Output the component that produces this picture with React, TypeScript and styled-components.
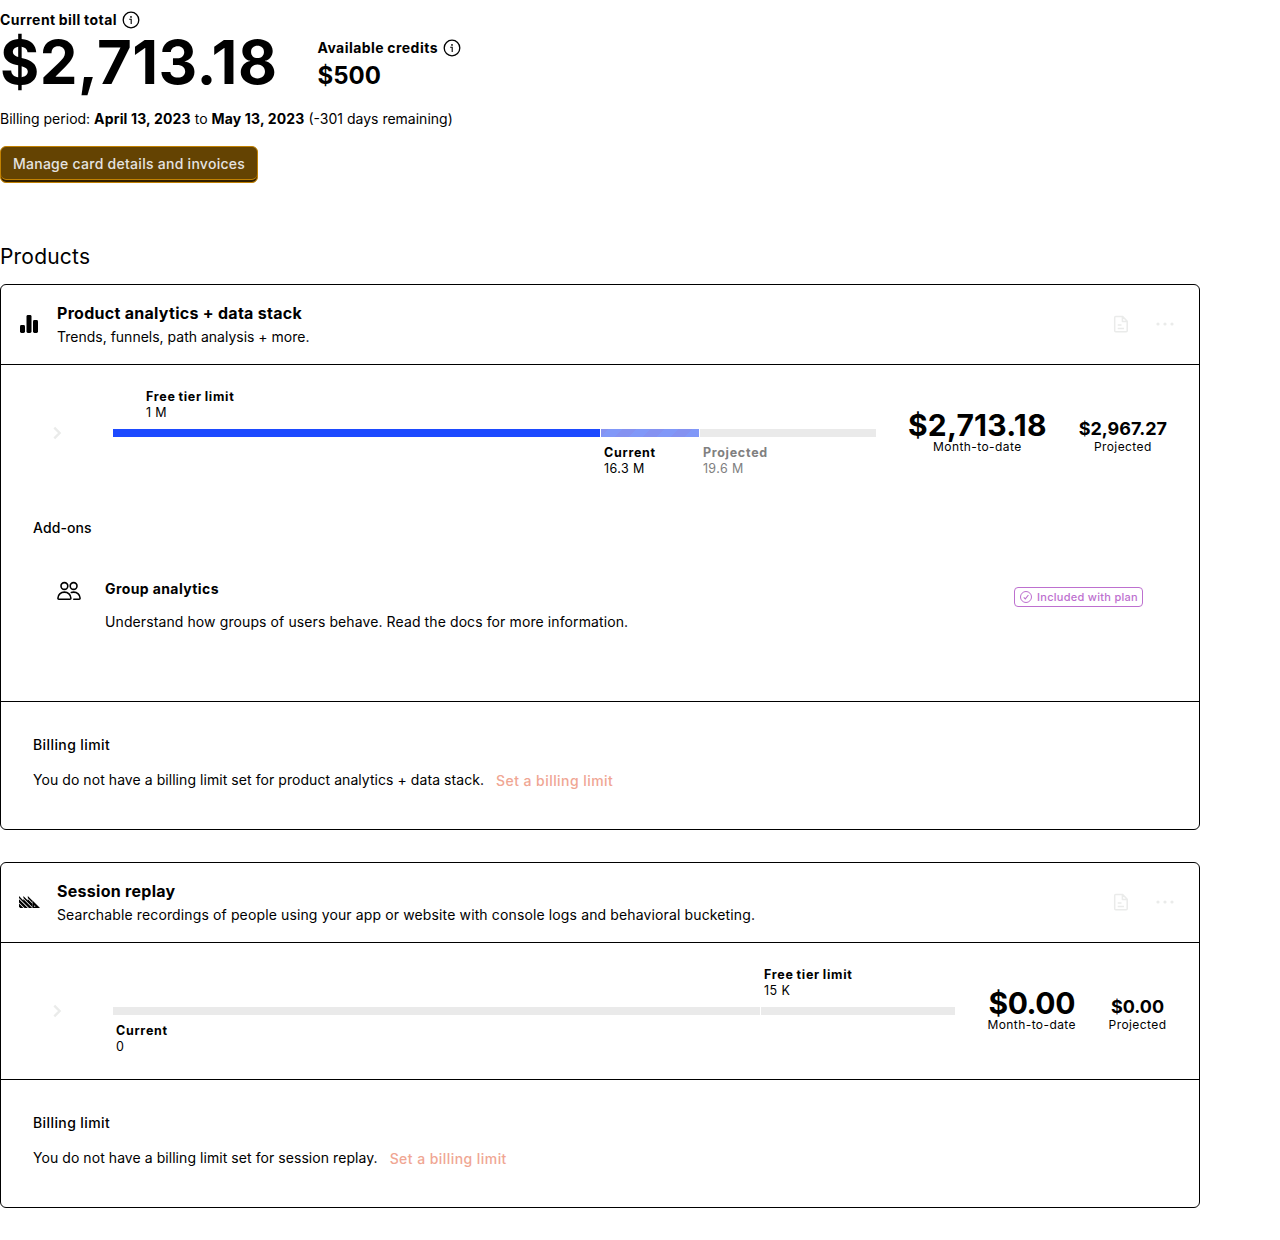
import React from "react";
import styled, { createGlobalStyle } from "styled-components";

const GlobalStyle = createGlobalStyle`
  *, *::before, *::after { box-sizing: border-box; }
  body {
    margin: 0;
    background: #fff;
    color: #000;
    font-family: Inter, "Liberation Sans", sans-serif;
    font-size: 14px;
    line-height: 20px;
  }
  svg { display: block; flex: none; }
`;

const Page = styled.main`
  width: 1200px;
  padding-top: 10px;
`;
const Summary = styled.section`
  display: flex;
  align-items: flex-start;
  height: 84px;
  gap: 40px;
`;
const SummaryItem = styled.div<{ $offset?: number }>`
  padding-top: ${(p) => p.$offset ?? 0}px;
`;
const SummaryLabel = styled.div`
  display: flex;
  align-items: center;
  gap: 4px;
  font-weight: 700;
  letter-spacing: 0.46px;
  word-spacing: -0.6px;
  white-space: nowrap;
`;
const BillTotal = styled.div`
  margin-top: 2px;
  font-size: 60px;
  line-height: 60px;
  font-weight: 700;
  letter-spacing: 0.45px;
`;
const Credits = styled.div`
  margin-top: 2px;
  font-size: 24px;
  line-height: 32px;
  font-weight: 700;
`;
const Period = styled.p`
  margin: 15px 0 17px;

  b { letter-spacing: 0.16px; }
`;
const ManageButton = styled.button`
  display: flex;
  align-items: center;
  justify-content: center;
  width: 258px;
  height: 37px;
  padding: 0 0 2px;
  border: 1px solid #c28102;
  border-radius: 6px;
  background: #644302;
  box-shadow: inset 0 -2px 0 #321f00, inset 0 -3px 0 #c28102;
  color: #e4e3e1;
  font: 500 14px/20px Inter, sans-serif;
  letter-spacing: 0.27px;
  white-space: nowrap;
`;
const Heading = styled.h2`
  margin: 58px 0 11px;
  font-size: 21px;
  line-height: 32px;
  font-weight: 400;
  letter-spacing: 0.2px;
`;
const Card = styled.article`
  margin-bottom: 32px;
  border: 1px solid #000;
  border-radius: 6px;
`;
const CardHeader = styled.header`
  display: flex;
  align-items: center;
  gap: 16px;
  height: 80px;
  padding: 0 22px 0 16px;
  border-bottom: 1px solid #000;

  > svg { margin-bottom: 1px; }
`;
const HeaderText = styled.div<{ $tracking: number }>`
  flex: 1;
  line-height: 24px;
  letter-spacing: ${(p) => p.$tracking}px;
`;
const Title = styled.h3`
  margin: 0;
  font-size: 16px;
  line-height: 24px;
  font-weight: 700;
  letter-spacing: 0.28px;
`;
const HeaderActions = styled.div`
  display: flex;
  gap: 20px;
  margin-bottom: 1px;
  color: #eaebea;
`;
const Usage = styled.div`
  display: flex;
  align-items: center;
  gap: 32px;
  height: 136px;
  padding: 0 32px;
`;
const Expander = styled.div`
  display: flex;
  justify-content: center;
  width: 48px;
  color: #eaebea;
`;
const Gauge = styled.div`
  flex: 1;
  display: flex;
  flex-direction: column;
  gap: 8px;
`;
const Labels = styled.div`
  position: relative;
  height: 32px;
`;
const Marker = styled.div<{ $muted?: boolean }>`
  position: absolute;
  top: 0;
  padding-left: 3px;
  font-size: 12.5px;
  line-height: 16px;
  letter-spacing: 0.4px;
  white-space: nowrap;
  color: ${(p) => (p.$muted ? "#808080" : "#000")};

  b {
    letter-spacing: 0.72px;
    word-spacing: -0.8px;
  }
`;
const Track = styled.div`
  display: flex;
  height: 8px;
  background: #eaeaea;
`;
const Segment = styled.div<{ $kind: "used" | "projected" | "empty" }>`
  border-right: 1px solid #fff;
  background: ${(p) =>
    p.$kind === "used"
      ? "#1d4aff"
      : p.$kind === "projected"
      ? "repeating-linear-gradient(-45deg, #8198f8 0 10px, #8592f1 10px 20px)"
      : "#eaeaea"};
`;
const Price = styled.div`
  display: flex;
  flex-direction: column;
  align-items: center;
  min-width: 59px;
`;
const Prices = styled.div`
  display: flex;
  align-items: flex-end;
  gap: 32px;
  padding-bottom: 2px;
`;
const Amount = styled.div<{ $large?: boolean; $tracking?: number }>`
  font-size: ${(p) => (p.$large ? 30 : 18)}px;
  line-height: ${(p) => (p.$large ? 30 : 22)}px;
  font-weight: 700;
  letter-spacing: ${(p) => p.$tracking ?? 0}px;
`;
const Caption = styled.div`
  font-size: 12px;
  line-height: 14px;
  letter-spacing: 0.42px;
`;
const Addons = styled.section`
  height: 200px;
  padding: 17px 32px 0;
`;
const Subheading = styled.h4<{ $tracking?: number }>`
  margin: 0;
  font-size: 14px;
  line-height: 20px;
  font-weight: 500;
  letter-spacing: ${(p) => p.$tracking ?? 0.4}px;
`;
const Addon = styled.div`
  display: flex;
  align-items: flex-start;
  gap: 24px;
  margin-top: 41px;
  padding: 0 24px;
`;
const AddonText = styled.div`
  flex: 1;

  b { letter-spacing: 0.4px; }
  p {
    margin: 13px 0 0;
    letter-spacing: 0.1px;
  }
`;
const Badge = styled.div`
  display: flex;
  align-items: center;
  gap: 4px;
  height: 20px;
  margin-top: 8px;
  padding: 0 4px;
  border: 1px solid #bd70cf;
  border-radius: 4px;
  color: #bd70cf;
  font-size: 11px;
  font-weight: 500;
  letter-spacing: 0.28px;
  white-space: nowrap;
`;
const Limit = styled.section`
  height: 128px;
  padding: 33px 32px 0;
  border-top: 1px solid #000;
`;
const LimitRow = styled.div`
  display: flex;
  gap: 12px;
  margin-top: 15px;
  letter-spacing: 0.06px;
`;
const LimitLink = styled.span`
  padding-top: 1px;
  color: #f0a693;
  font-weight: 500;
  letter-spacing: 0.44px;
`;

const InfoIcon = () => (
  <svg width="20" height="20" viewBox="0 0 20 20" fill="none" stroke="currentColor">
    <circle cx="10" cy="10" r="7.8" strokeWidth="1.3" />
    <path d="M8.2 9.2h2v4.8" strokeWidth="1.1" />
    <circle cx="10" cy="6.9" r=".9" fill="currentColor" stroke="none" />
  </svg>
);
const ChartIcon = () => (
  <svg width="24" height="24" viewBox="0 0 24 24" fill="currentColor">
    <rect x="3" y="13" width="5" height="8" rx="1.4" />
    <rect x="9.5" y="3" width="5" height="18" rx="1.4" />
    <rect x="16" y="8" width="5" height="13" rx="1.4" />
  </svg>
);
const ReplayIcon = () => (
  <svg width="24" height="24" viewBox="0 0 24 24" fill="currentColor">
    <defs>
      <clipPath id="stripeArea">
        <path d="M2 6l4.4 4.4V6l4.4 4.4V6l4.7 4.7V18H2z" />
      </clipPath>
    </defs>
    <g clipPath="url(#stripeArea)" stroke="currentColor" strokeWidth="2.3">
      <path d="M-3 10.2L9 22.2M-3 5.8L12 20.800M-3 1.4L16 20.4M1.400 1.400L20 20M5.800 1.400L22 17.600M10.200 1.400L24 15.200" />
    </g>
    <path d="M15.5 10.5L23 18h-7.5z" />
    <circle cx="17.7" cy="16.2" r=".6" fill="#fff" />
  </svg>
);
const DocumentIcon = () => (
  <svg width="24" height="24" viewBox="0 0 24 24" fill="none" stroke="currentColor" strokeWidth="1.5" strokeLinejoin="round">
    <path d="M13.7 4.5H6.7a1 1 0 0 0-1 1v13.2a1 1 0 0 0 1 1h10.5a1 1 0 0 0 1-1V9.2zM13.4 4.7v4.8h4.8" />
    <path d="M8.7 13h3.8M8.7 16.5h6.3" />
  </svg>
);
const MoreIcon = () => (
  <svg width="24" height="24" viewBox="0 0 24 24" fill="currentColor">
    <circle cx="5" cy="12" r="1.6" />
    <circle cx="12" cy="12" r="1.6" />
    <circle cx="19" cy="12" r="1.6" />
  </svg>
);
const ChevronIcon = () => (
  <svg width="24" height="24" viewBox="0 0 24 24" fill="none" stroke="currentColor" strokeWidth="2.4">
    <path d="M9.3 6.7L14.6 12l-5.300 5.300" />
  </svg>
);
const PeopleIcon = () => (
  <svg width="24" height="24" viewBox="0 0 24 24" fill="none" stroke="currentColor" strokeWidth="1.6" strokeLinecap="round" strokeLinejoin="round">
    <circle cx="7.4" cy="7" r="3.4" />
    <circle cx="16.6" cy="7" r="3.4" />
    <path d="M.9 19.200c0-3.600 2.900-6.100 6.500-6.100s6.500 2.500 6.500 6.100c0 .6-.4 1-1 1h-11c-.6 0-1-.4-1-1z" />
    <path d="M14.300 13.500c.7-.3 1.500-.4 2.300-.4 3.600 0 6.500 2.500 6.500 6.100 0 .6-.4 1-1 1h-5.300" />
  </svg>
);
const CheckIcon = () => (
  <svg width="14" height="14" viewBox="0 0 14 14" fill="none" stroke="currentColor">
    <circle cx="7" cy="7" r="5.5" />
    <path d="M4.7 7.3l1.6 1.6 3.1-3.9" strokeWidth="1.1" />
  </svg>
);

type Mark = { label: string; value: string; at: number; muted?: boolean };
type ProductProps = {
  icon: React.ReactNode;
  name: string;
  description: string;
  tracking: number;
  priceTracking: number;
  segments: { kind: "used" | "projected" | "empty"; size: number }[];
  above: Mark[];
  below: Mark[];
  monthToDate: string;
  projected: string;
  limitText: string;
  children?: React.ReactNode;
};

const MarkerRow = ({ marks }: { marks: Mark[] }) => (
  <Labels>
    {marks.map((m) => (
      <Marker key={m.label} $muted={m.muted} style={{ left: `${m.at}%` }}>
        <b>{m.label}</b>
        <div>{m.value}</div>
      </Marker>
    ))}
  </Labels>
);

const Product = (p: ProductProps) => (
  <Card>
    <CardHeader>
      {p.icon}
      <HeaderText $tracking={p.tracking}>
        <Title>{p.name}</Title>
        {p.description}
      </HeaderText>
      <HeaderActions>
        <DocumentIcon />
        <MoreIcon />
      </HeaderActions>
    </CardHeader>
    <Usage>
      <Expander><ChevronIcon /></Expander>
      <Gauge>
        <MarkerRow marks={p.above} />
        <Track>
          {p.segments.map((s) => (
            <Segment key={s.kind} $kind={s.kind} style={{ width: `${s.size}%` }} />
          ))}
        </Track>
        <MarkerRow marks={p.below} />
      </Gauge>
      <Prices>
        <Price>
          <Amount $large $tracking={p.priceTracking}>{p.monthToDate}</Amount>
          <Caption>Month-to-date</Caption>
        </Price>
        <Price>
          <Amount>{p.projected}</Amount>
          <Caption>Projected</Caption>
        </Price>
      </Prices>
    </Usage>
    {p.children}
    <Limit>
      <Subheading>Billing limit</Subheading>
      <LimitRow>
        <span>{p.limitText}</span>
        <LimitLink>Set a billing limit</LimitLink>
      </LimitRow>
    </Limit>
  </Card>
);

export default function App() {
  return (
    <Page>
      <GlobalStyle />
      <Summary>
        <SummaryItem>
          <SummaryLabel>Current bill total <InfoIcon /></SummaryLabel>
          <BillTotal>$2,713.18</BillTotal>
        </SummaryItem>
        <SummaryItem $offset={28}>
          <SummaryLabel>Available credits <InfoIcon /></SummaryLabel>
          <Credits>$500</Credits>
        </SummaryItem>
      </Summary>
      <Period>
        Billing period: <b>April 13, 2023</b> to <b>May 13, 2023</b> (-301 days remaining)
      </Period>
      <ManageButton>Manage card details and invoices</ManageButton>
      <Heading>Products</Heading>
      <Product
        icon={<ChartIcon />}
        name="Product analytics + data stack"
        description="Trends, funnels, path analysis + more."
        tracking={0}
        priceTracking={0.22}
        segments={[{ kind: "used", size: 63.97 }, { kind: "projected", size: 12.95 }]}
        above={[{ label: "Free tier limit", value: "1 M", at: 3.92 }]}
        below={[
          { label: "Current", value: "16.3 M", at: 63.97 },
          { label: "Projected", value: "19.6 M", at: 76.92, muted: true },
        ]}
        monthToDate="$2,713.18"
        projected="$2,967.27"
        limitText="You do not have a billing limit set for product analytics + data stack."
      >
        <Addons>
          <Subheading $tracking={0.1}>Add-ons</Subheading>
          <Addon>
            <PeopleIcon />
            <AddonText>
              <b>Group analytics</b>
              <p>Understand how groups of users behave. Read the docs for more information.</p>
            </AddonText>
            <Badge><CheckIcon /> Included with plan</Badge>
          </Addon>
        </Addons>
      </Product>
      <Product
        icon={<ReplayIcon />}
        name="Session replay"
        description="Searchable recordings of people using your app or website with console logs and behavioral bucketing."
        tracking={0.13}
        priceTracking={-0.4}
        segments={[{ kind: "empty", size: 76.92 }]}
        above={[{ label: "Free tier limit", value: "15 K", at: 76.92 }]}
        below={[{ label: "Current", value: "0", at: 0 }]}
        monthToDate="$0.00"
        projected="$0.00"
        limitText="You do not have a billing limit set for session replay."
      />
    </Page>
  );
}
